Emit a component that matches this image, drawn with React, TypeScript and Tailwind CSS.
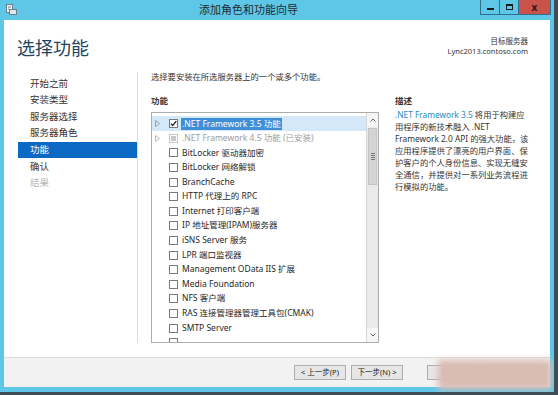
import React from "react";

const FONT = '"Noto Sans", "Noto Sans CJK SC", sans-serif';

function Triangle({ gray }: { gray?: boolean }) {
  return (
    <svg width="5" height="7" viewBox="0 0 5 7" className="block">
      <path d="M0.5 0.5 L4.5 3.5 L0.5 6.5 Z" fill="none" stroke={gray ? "#b8b8b8" : "#a0a0a0"} strokeWidth="1" />
    </svg>
  );
}

function Check({ state }: { state: "on" | "off" | "dis" }) {
  if (state === "dis") {
    return (
      <div className="w-[9px] h-[9px] border border-[#c4c4c4] bg-white flex items-center justify-center shrink-0">
        <div className="w-[5px] h-[5px] bg-[#c8c8c8]" />
      </div>
    );
  }
  return (
    <div className="w-[9px] h-[9px] border border-[#7a7a7a] bg-white flex items-center justify-center shrink-0">
      {state === "on" && (
        <svg width="7" height="7" viewBox="0 0 7 7" className="block">
          <path d="M0.8 3.6 L2.7 5.5 L6.3 1.2" fill="none" stroke="#222" strokeWidth="1.3" />
        </svg>
      )}
    </div>
  );
}

const items = [
  "BitLocker 驱动器加密",
  "BitLocker 网络解锁",
  "BranchCache",
  "HTTP 代理上的 RPC",
  "Internet 打印客户端",
  "IP 地址管理(IPAM)服务器",
  "iSNS Server 服务",
  "LPR 端口监视器",
  "Management OData IIS 扩展",
  "Media Foundation",
  "NFS 客户端",
  "RAS 连接管理器管理工具包(CMAK)",
  "SMTP Server",
];

const nav = ["开始之前", "安装类型", "服务器选择", "服务器角色", "功能", "确认", "结果"];

export default function App() {
  return (
    <div
      className="w-[558px] h-[395px] bg-[#5ec7e8] border-r-[4px] border-b-[3px] border-[#3f4d54] flex flex-col overflow-hidden"
      style={{ fontFamily: FONT }}
    >
      {/* title bar */}
      <div className="h-[20px] flex items-start relative shrink-0">
        <div className="pl-[6px] pt-[4px]">
          <svg width="11" height="11" viewBox="0 0 11 11" className="block">
            <rect x="0.5" y="0.5" width="6" height="8" fill="#eef6fa" stroke="#6a7d88" strokeWidth="1" />
            <rect x="3.5" y="5.5" width="7" height="5" fill="#dfe7ec" stroke="#6a7d88" strokeWidth="1" />
            <path d="M2 3 H5 M2 5 H3" stroke="#6a7d88" strokeWidth="1" />
          </svg>
        </div>
        <div className="flex-1 text-center text-[11px] leading-[20px] text-[#1f2a30]">添加角色和功能向导</div>
        <div className="flex h-[15px] mr-[3px] border border-t-0 border-[#2f6f8c]">
          <div className="w-[19px] flex items-center justify-center border-r border-[#2f6f8c]">
            <div className="w-[7px] h-[2px] bg-[#1b1b1b] mt-[3px]" />
          </div>
          <div className="w-[19px] flex items-center justify-center border-r border-[#2f6f8c]">
            <div className="w-[7px] h-[6px] border border-[#1b1b1b] border-t-2" />
          </div>
          <div className="w-[31px] bg-[#c9534a] flex items-center justify-center text-[10px] font-bold leading-none text-[#2a1a1a]">
            x
          </div>
        </div>
      </div>

      {/* body */}
      <div className="ml-[4px] mr-[4px] mb-[5px] flex-1 bg-white flex flex-col">
        {/* header */}
        <div className="h-[52px] flex justify-between items-start pl-[13px] pr-[22px] pt-[16px] shrink-0">
          <div className="text-[18px] leading-[24px] text-[#22445e]">选择功能</div>
          <div className="text-right text-[7.5px] leading-[10px] text-[#333]">
            <div>目标服务器</div>
            <div>Lync2013.contoso.com</div>
          </div>
        </div>

        {/* middle */}
        <div className="flex-1 flex min-h-0">
          {/* nav */}
          <div className="w-[134px] shrink-0 mb-[14px] border-r border-[#dedede] pl-[14px] pt-[3.5px]">
            {nav.map((n, i) => (
              <div
                key={n}
                className={
                  "h-[16.6px] pl-[12px] flex items-center text-[9.5px] " +
                  (i === 4
                    ? "bg-[#0b68c3] text-white"
                    : i === 6
                    ? "text-[#b8b8b8]"
                    : "text-[#333]")
                }
              >
                {n}
              </div>
            ))}
          </div>

          {/* content */}
          <div className="flex-1 pl-[13px] flex flex-col">
            <div className="h-[10px] leading-[10px] text-[8.3px] text-[#333]">
              选择要安装在所选服务器上的一个或多个功能。
            </div>
            <div className="flex mt-[13px]">
              <div className="w-[228px] flex flex-col">
                <div className="h-[12px] leading-[12px] text-[8.5px] font-bold text-[#333]">功能</div>
                <div className="mt-[5px] h-[231px] border border-[#acacac] flex overflow-hidden">
                  <div className="flex-1 pt-[3px] overflow-hidden">
                    <div className="h-[15px] flex items-center pl-[3px] bg-[#d3e8f8]">
                      <div className="w-[14px]"><Triangle /></div>
                      <Check state="on" />
                      <div className="ml-[3px] px-[1px] bg-[#3f8fd8] text-white text-[8.5px] leading-[12px] whitespace-nowrap">
                        .NET Framework 3.5 功能
                      </div>
                    </div>
                    <div className="h-[14.6px] flex items-center pl-[3px]">
                      <div className="w-[14px]"><Triangle gray /></div>
                      <Check state="dis" />
                      <div className="ml-[4px] text-[#9c9c9c] text-[8.5px] whitespace-nowrap">
                        .NET Framework 4.5 功能 (已安装)
                      </div>
                    </div>
                    {items.map((t) => (
                      <div key={t} className="h-[14.6px] flex items-center pl-[17px]">
                        <Check state="off" />
                        <div className="ml-[4px] text-[#262626] text-[8.5px] whitespace-nowrap">{t}</div>
                      </div>
                    ))}
                    <div className="h-[14.6px] flex items-center pl-[17px]">
                      <Check state="off" />
                    </div>
                  </div>
                  {/* scrollbar */}
                  <div className="w-[12px] border-l border-[#d6d6d6] bg-[#eaeaea] flex flex-col">
                    <div className="h-[14px] bg-[#f6f6f6] flex items-center justify-center">
                      <svg width="6" height="4" viewBox="0 0 6 4" className="block">
                        <path d="M0.5 3.5 L3 1 L5.5 3.5" fill="none" stroke="#666" strokeWidth="1" />
                      </svg>
                    </div>
                    <div className="mt-[1px] h-[57px] mx-[1px] bg-[#d4d4d4] border border-[#c4c4c4] flex flex-col items-center justify-center gap-[1px]">
                      <div className="w-[4px] h-[1px] bg-[#777]" />
                      <div className="w-[4px] h-[1px] bg-[#777]" />
                      <div className="w-[4px] h-[1px] bg-[#777]" />
                      <div className="w-[4px] h-[1px] bg-[#777]" />
                    </div>
                    <div className="flex-1" />
                    <div className="h-[14px] bg-[#f6f6f6] flex items-center justify-center">
                      <svg width="6" height="4" viewBox="0 0 6 4" className="block">
                        <path d="M0.5 0.5 L3 3 L5.5 0.5" fill="none" stroke="#666" strokeWidth="1" />
                      </svg>
                    </div>
                  </div>
                </div>
              </div>
              <div className="ml-[16px] flex flex-col">
                <div className="h-[12px] leading-[12px] text-[8.5px] font-bold text-[#333]">描述</div>
                <div className="mt-[2px] text-[8.3px] leading-[12px] text-[#333] whitespace-nowrap">
                  <div>
                    <span className="text-[#1e8cbf]">.NET Framework 3.5</span> 将用于构建应
                  </div>
                  <div>用程序的新技术融入 .NET</div>
                  <div>Framework 2.0 API 的强大功能，该</div>
                  <div>应用程序提供了漂亮的用户界面、保</div>
                  <div>护客户的个人身份信息、实现无缝安</div>
                  <div>全通信，并提供对一系列业务流程进</div>
                  <div>行模拟的功能。</div>
                </div>
              </div>
            </div>
          </div>
        </div>

        {/* footer */}
        <div className="h-[30px] shrink-0 border-t border-[#dcdcdc] bg-[#f3f2f2] flex items-center justify-end pr-[14px] relative">
          <button className="w-[52px] h-[15px] border border-[#adadad] bg-[#e6e6e6] text-[7.5px] text-[#222] leading-none">
            &lt; 上一步(P)
          </button>
          <button className="ml-[5px] w-[52px] h-[15px] border border-[#adadad] bg-[#e6e6e6] text-[7.5px] text-[#222] leading-none">
            下一步(N) &gt;
          </button>
          <button className="ml-[24px] w-[52px] h-[15px] border border-[#adadad] bg-[#e6e6e6] text-[7.5px] text-[#222] leading-none">
            安装(I)
          </button>
          <button className="ml-[5px] w-[52px] h-[15px] border border-[#adadad] bg-[#e6e6e6] text-[7.5px] text-[#222] leading-none">
            取消
          </button>
          <div className="absolute left-[434px] top-[2px] w-[114px] h-[30px] bg-[#d9bdb4] blur-[3px]" />
        </div>
      </div>
    </div>
  );
}
